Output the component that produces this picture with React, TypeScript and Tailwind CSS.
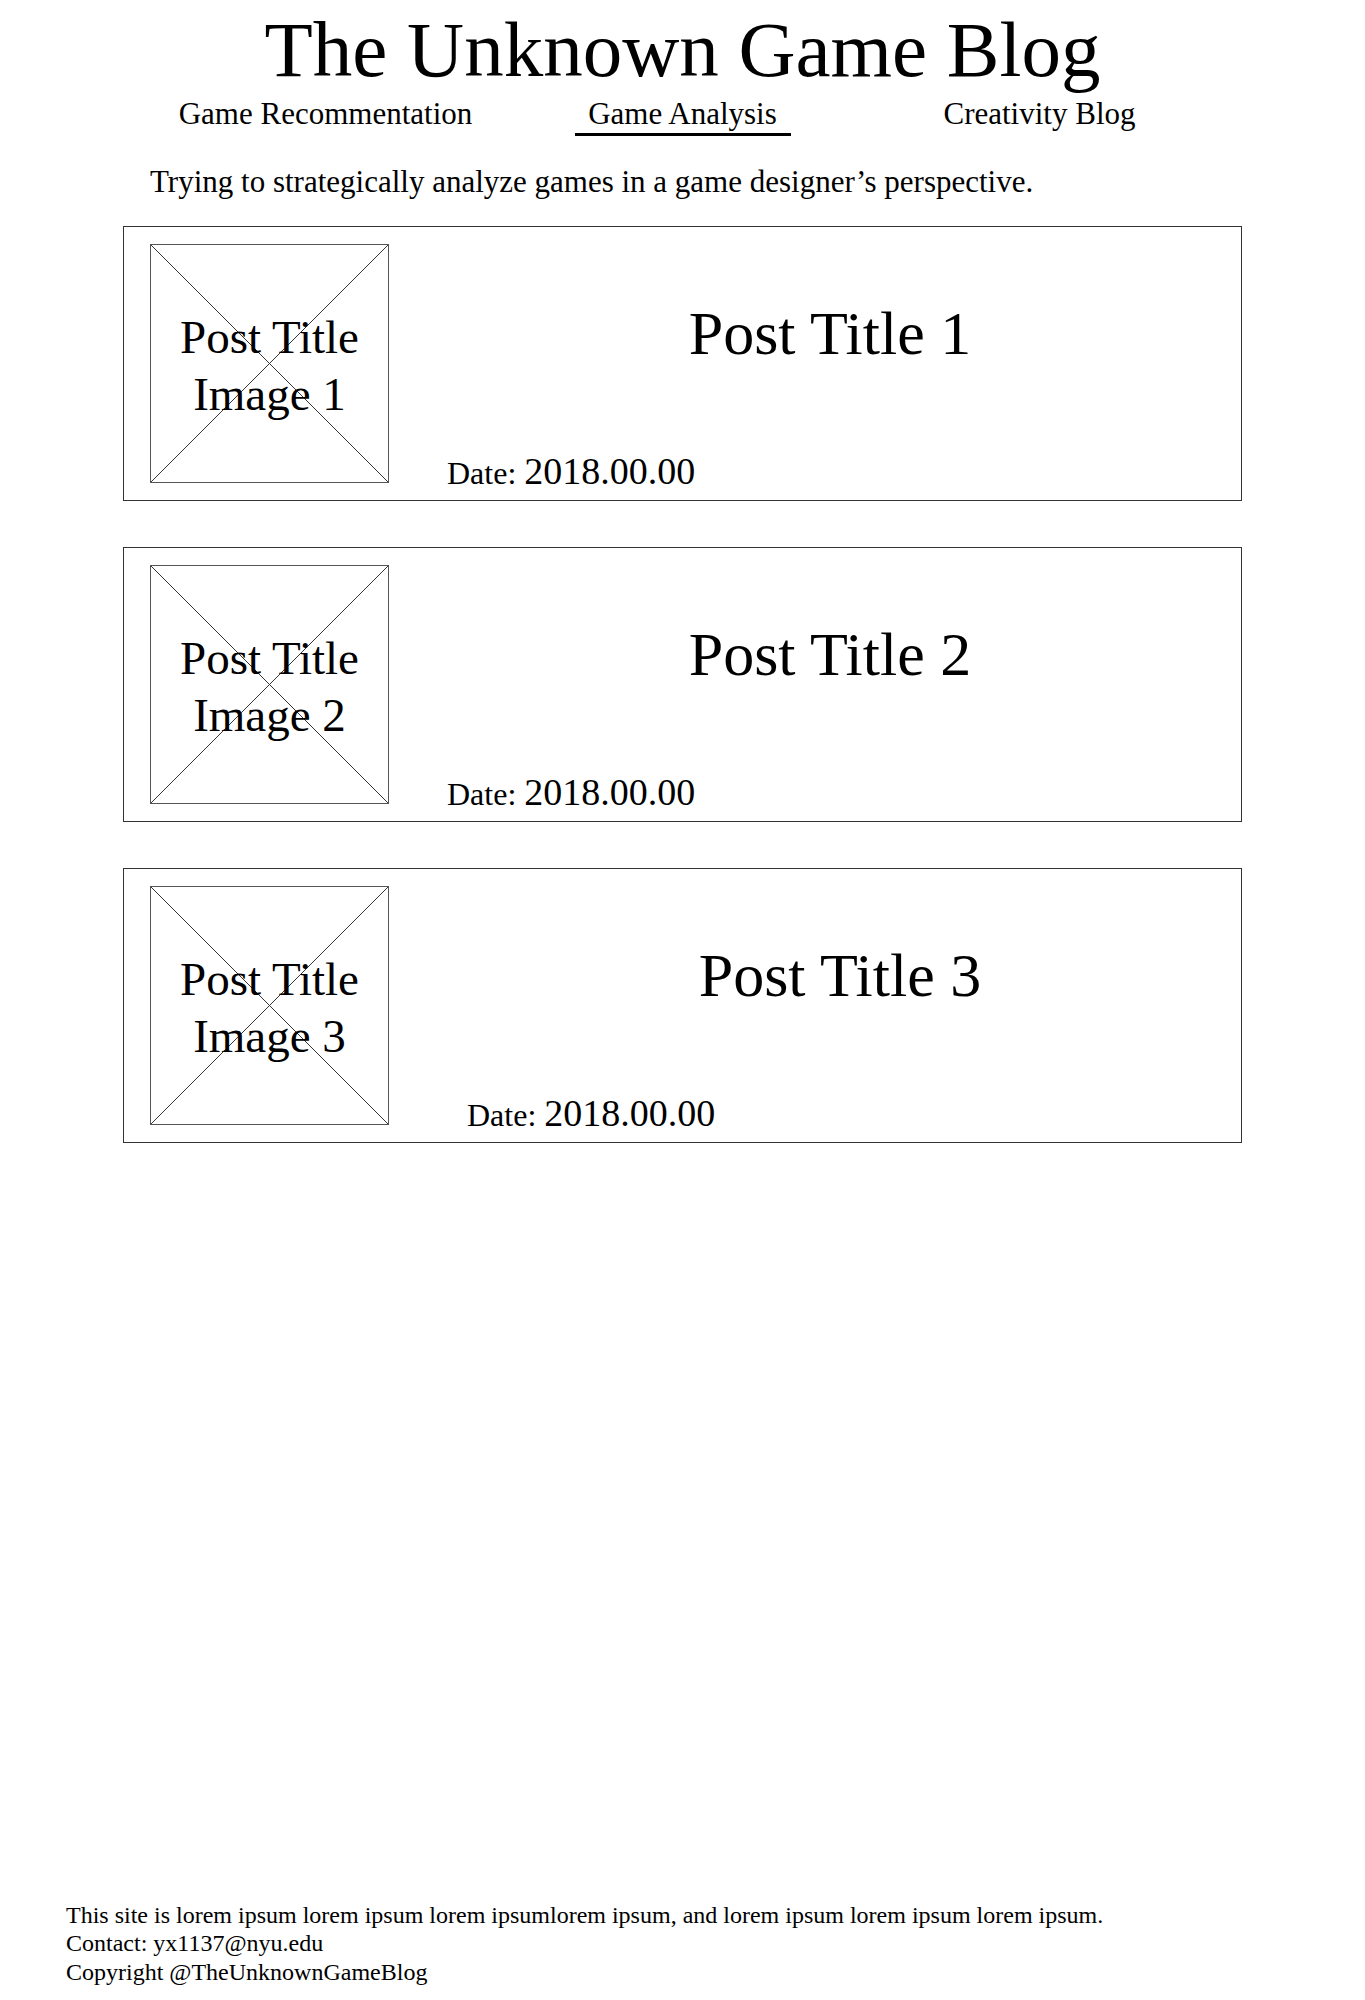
import React from 'react';

const NAV = [
  { label: 'Game Recommentation', active: false },
  { label: 'Game Analysis', active: true },
  { label: 'Creativity Blog', active: false },
];

// offsets differ a little per card in the mockup
const POSTS = [
  { n: 1, titlePad: 'pl-[30px]', datePad: 'pl-[58px]' },
  { n: 2, titlePad: 'pl-[30px]', datePad: 'pl-[58px]' },
  { n: 3, titlePad: 'pl-[50px]', datePad: 'pl-[78px]' },
];

function Placeholder({ n }: { n: number }) {
  return (
    <div className="relative w-[239px] h-[239px] shrink-0 border border-[#555] flex items-center justify-center">
      {/* crossed-out image box */}
      <svg className="absolute inset-0 w-full h-full" viewBox="0 0 100 100" preserveAspectRatio="none">
        <line x1="0" y1="0" x2="100" y2="100" stroke="#333" strokeWidth="1" vectorEffect="non-scaling-stroke" />
        <line x1="100" y1="0" x2="0" y2="100" stroke="#333" strokeWidth="1" vectorEffect="non-scaling-stroke" />
      </svg>
      <div className="relative pt-[5px] text-center text-[47px] leading-[57px]">
        Post Title
        <br />
        Image {n}
      </div>
    </div>
  );
}

function PostCard({ n, titlePad, datePad }: { n: number; titlePad: string; datePad: string }) {
  return (
    <article className="flex border border-[#333] pl-[26px] py-[17px]">
      <Placeholder n={n} />
      <div className="flex-1 flex flex-col">
        <h2 className={`mt-[55px] text-center text-[62px] leading-[68px] font-normal ${titlePad}`}>
          Post Title {n}
        </h2>
        <p className={`mt-auto text-[38px] leading-[20px] ${datePad}`}>
          <span className="text-[32px]">Date: </span>2018.00.00
        </p>
      </div>
    </article>
  );
}

export default function App() {
  return (
    <div className="min-h-[2000px] flex flex-col bg-white text-black font-['Liberation_Serif','Times_New_Roman',serif]">
      <header>
        <h1 className="pt-[10px] text-center text-[79px] leading-[79px] font-normal">The Unknown Game Blog</h1>
        <nav className="mt-[6px] mx-auto w-[1071px] grid grid-cols-3">
          {NAV.map((item) => (
            <div key={item.label} className="flex flex-col items-center">
              <span className="text-[31px] leading-[37px] whitespace-nowrap">{item.label}</span>
              {item.active && <div className="mt-[1px] w-[216px] h-[3px] bg-black" />}
            </div>
          ))}
        </nav>
      </header>

      <main className="ml-[123px] w-[1119px]">
        <p className="mt-[28px] pl-[27px] text-[31px] leading-[36px]">
          Trying to strategically analyze games in a game designer’s perspective.
        </p>
        <div className="mt-[26px] flex flex-col gap-[46px]">
          {POSTS.map((p) => (
            <PostCard key={p.n} {...p} />
          ))}
        </div>
      </main>

      <footer className="mt-auto pl-[66px] pb-[13px] text-[24px] leading-[28.8px]">
        <p>This site is lorem ipsum lorem ipsum lorem ipsumlorem ipsum, and lorem ipsum lorem ipsum lorem ipsum.</p>
        <p>Contact: yx1137@nyu.edu</p>
        <p>Copyright @TheUnknownGameBlog</p>
      </footer>
    </div>
  );
}
